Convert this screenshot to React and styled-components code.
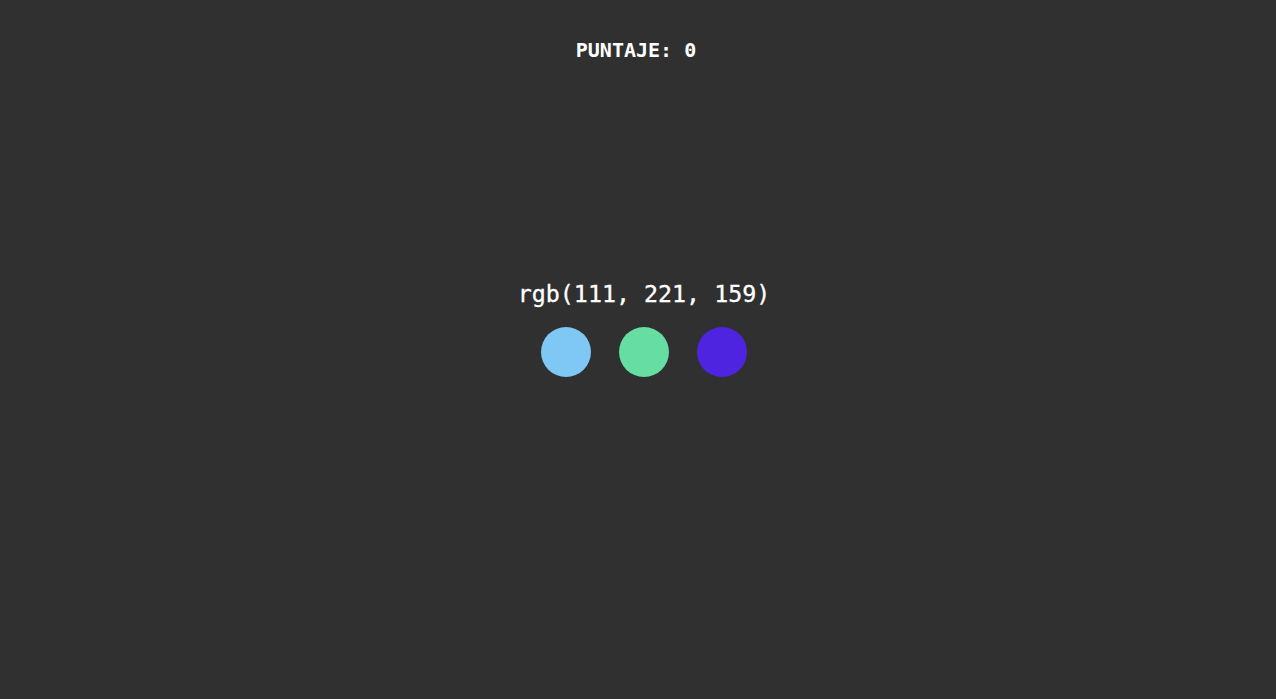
import React from 'react'
import styled, { createGlobalStyle } from 'styled-components'

const GlobalStyle = createGlobalStyle`
  html, body {
    margin: 0;
    padding: 0;
    background: #303030;
  }
  body {
    font-family: "DejaVu Sans Mono", "Liberation Mono", monospace;
    color: #fff;
  }
`

const Page = styled.div`
  min-height: 699px;
  display: flex;
  flex-direction: column;
  align-items: center;
`

const Score = styled.h2`
  margin: 38px 4px 0 0;
  font-size: 20px;
  font-weight: bold;
  line-height: 24px;
`

const Game = styled.div`
  margin-top: 218px;
  padding-left: 12px;
  display: flex;
  flex-direction: column;
  align-items: center;
`

const Target = styled.h1`
  margin: 0;
  font-size: 23.3px;
  font-weight: normal;
  line-height: 28px;
  -webkit-text-stroke: 0.3px #fff;
`

const Options = styled.div`
  display: flex;
  gap: 28px;
  margin-top: 19px;
`

const Circle = styled.button`
  width: 50px;
  height: 50px;
  border: none;
  padding: 0;
  border-radius: 50%;
  background: ${p => p.color};
  cursor: pointer;
`

const colors = ['rgb(127, 199, 244)', 'rgb(101, 221, 163)', 'rgb(79, 36, 224)']

export default function App() {
  return (
    <Page>
      <GlobalStyle />
      <Score>PUNTAJE: 0</Score>
      <Game>
        <Target>rgb(111, 221, 159)</Target>
        <Options>
          {colors.map(c => <Circle key={c} color={c} />)}
        </Options>
      </Game>
    </Page>
  )
}
